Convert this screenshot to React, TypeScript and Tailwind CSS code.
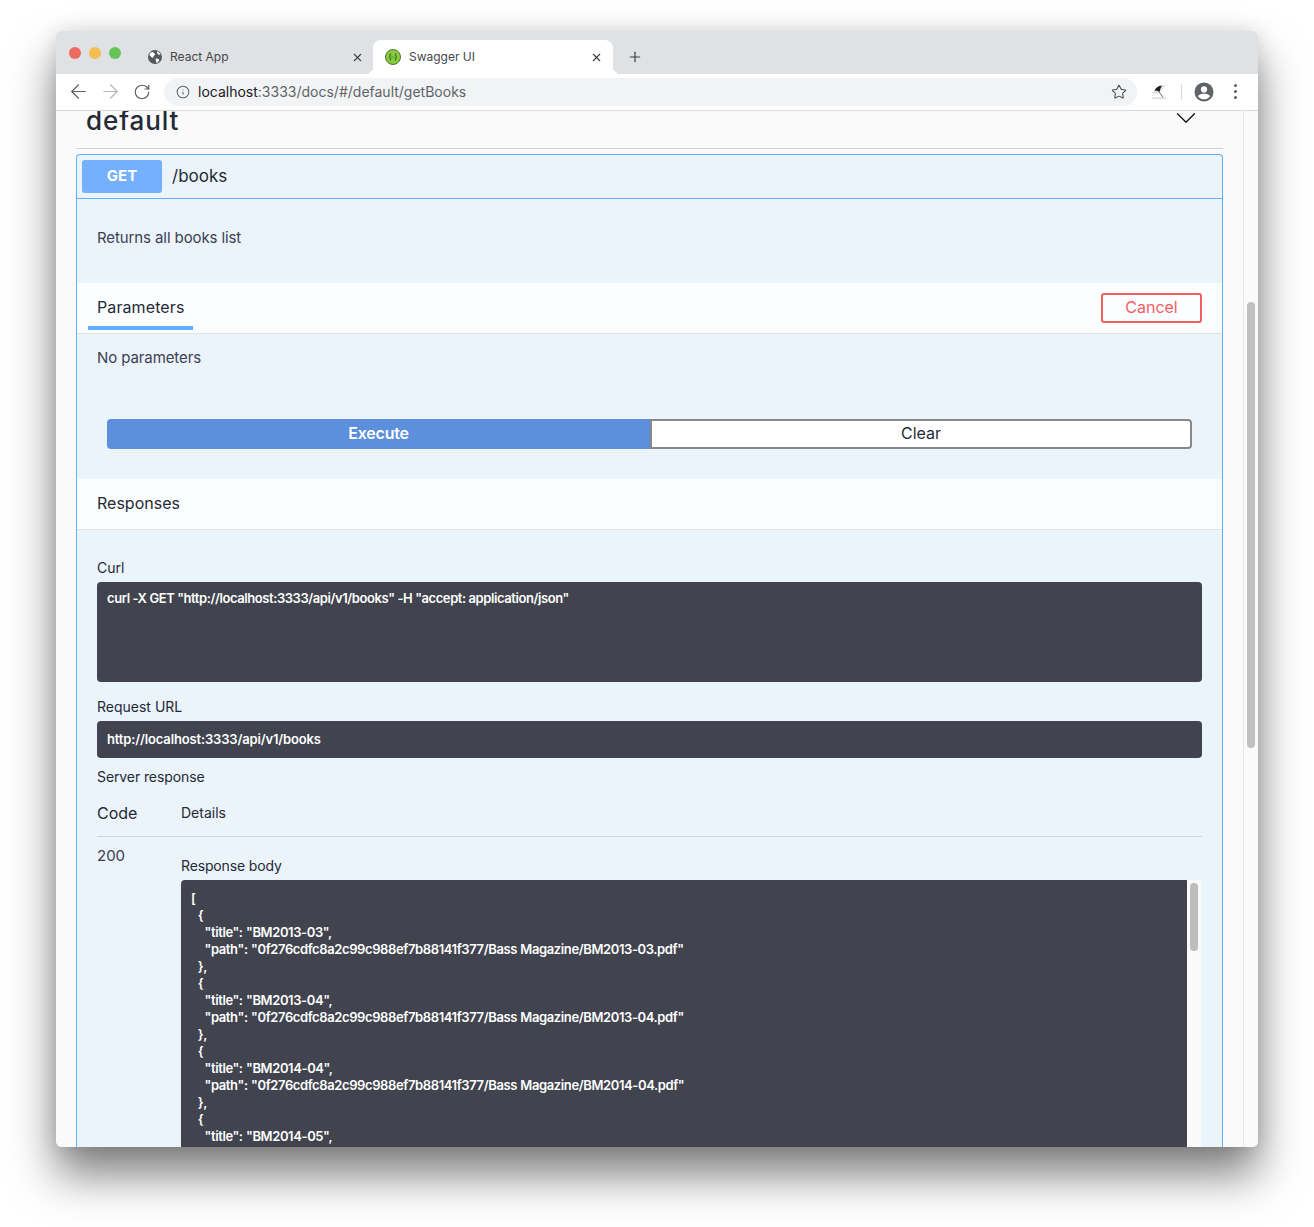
import React from 'react';
import { ArrowLeft, ArrowRight, RotateCw, Info, Star, X, Plus, ChevronDown } from 'lucide-react';

/* ── Browser chrome ─────────────────────────────── */

function GlobeIcon() {
  return (
    <svg width="16" height="16" viewBox="0 0 16 16" className="shrink-0">
      <circle cx="8" cy="8" r="7" fill="#55585d" />
      <path d="M3.2 3.8l2.3-.8 2 1.2.6 1.6-1.5 1.3-.3 1.6-1.6-.2L2.4 6zM8.5 9.5l2.6.2 1.2 1.3-1.3 2.2-1.5.8-.6-2.4zM10 1.9l2.7 2 .8 2-2.2-.3-1.4-1.6z" fill="#fff" />
    </svg>
  );
}

function SwaggerIcon() {
  return (
    <svg width="16" height="16" viewBox="0 0 16 16" className="shrink-0">
      <circle cx="8" cy="8" r="7.5" fill="#84cc3c" stroke="#55703a" strokeWidth="1" />
      <path d="M6 4.5c-1.2 0-.6 2.6-1.1 3-.3.3-.5.4-.5.5s.2.2.5.5c.5.4-.1 3 1.1 3M10 4.5c1.2 0 .6 2.6 1.1 3 .3.3.5.4.5.5s-.2.2-.5.5c-.5.4.1 3-1.1 3" fill="none" stroke="#2c3f22" strokeWidth="0.9" />
      <circle cx="7" cy="8" r=".5" fill="#2c3f22" />
      <circle cx="9" cy="8" r=".5" fill="#2c3f22" />
    </svg>
  );
}

function UmbrellaIcon() {
  return (
    <svg width="16" height="16" viewBox="0 0 16 16" className="shrink-0">
      <path d="M.5 9C1.2 8 2.3 7.2 3.5 7L8.5 8 6 10z" fill="#dcdcdc" />
      <path d="M11 1.6L15.5 1C13 2.5 11 4.5 9.5 8H8.5L9.5 4.5z" fill="#dedede" />
      <path d="M3.5 7C4.5 4 7 2 11 1.6L9.5 4.5 8.5 8C7 6.8 5 6.6 3.5 7z" fill="#1e1e1e" />
      <path d="M7.5 7.2l4.5 6.3" stroke="#8a6a50" strokeWidth="1" />
      <path d="M1 14.2h14" stroke="#d4d4d4" strokeWidth="1.2" />
    </svg>
  );
}

function AccountIcon() {
  return (
    <svg width="20" height="20" viewBox="0 0 20 20" className="shrink-0">
      <circle cx="10" cy="10" r="9.5" fill="#5f6368" />
      <circle cx="10" cy="7.4" r="3.1" fill="#fff" />
      <path d="M3.9 14.2C5.2 12.4 7.6 11.8 10 11.8s4.8.6 6.1 2.4C14.8 16.2 12.5 17.3 10 17.3s-4.8-1.1-6.1-3.1z" fill="#fff" />
    </svg>
  );
}

function Browser() {
  return (
    <div className="shrink-0">
      <div className="flex h-[43px] bg-[#dfe1e5]">
        <div className="flex w-[91px] items-center gap-2 pl-[13px] pt-[1px]">
          <span className="h-3 w-3 rounded-full bg-[#ee6a5e]" />
          <span className="h-3 w-3 rounded-full bg-[#f5bf4f]" />
          <span className="h-3 w-3 rounded-full bg-[#62c554]" />
        </div>
        <div className="mt-[9px] flex w-[226px] items-center text-[12px] text-[#45474b]">
          <GlobeIcon />
          <span className="ml-[7px] flex-1">React App</span>
          <X size={13} strokeWidth={2} className="mr-[9px] text-[#3c4043]" />
        </div>
        <div className="relative mt-[9px] flex w-[240px] items-center rounded-t-lg bg-white pl-[12px] text-[12px] text-[#45474b]">
          <span className="absolute -left-2 bottom-0 h-2 w-2 rounded-br-lg shadow-[4px_4px_0_0_#fff]" />
          <span className="absolute -right-2 bottom-0 h-2 w-2 rounded-bl-lg shadow-[-4px_4px_0_0_#fff]" />
          <SwaggerIcon />
          <span className="ml-[8px] flex-1">Swagger UI</span>
          <X size={13} strokeWidth={2} className="mr-[10px] text-[#3c4043]" />
        </div>
        <div className="mt-[9px] flex items-center pl-[14px]">
          <Plus size={16} strokeWidth={1.8} className="text-[#3c4043]" />
        </div>
      </div>
      <div className="flex h-[37px] items-center border-b border-[#d9d9d9] bg-white pb-px">
        <div className="flex w-[108px] items-center gap-[9px] pl-[11px]">
          <ArrowLeft size={23} strokeWidth={1.3} className="text-[#5f6368]" />
          <ArrowRight size={23} strokeWidth={1.3} className="text-[#b6b8bb]" />
          <RotateCw size={18} strokeWidth={1.6} className="ml-[2px] text-[#5f6368]" />
        </div>
        <div className="flex h-7 w-[973px] items-center rounded-full bg-[#f1f3f4] pl-[12px] pr-[10px] text-[14px] text-[#5f6368]">
          <Info size={14} strokeWidth={1.8} className="text-[#5f6368]" />
          <span className="ml-[8px] flex-1">
            <span className="text-[#202124]">localhost</span>:3333/docs/#/default/getBooks
          </span>
          <Star size={16} strokeWidth={1.6} className="text-[#4a4d51]" />
        </div>
        <div className="ml-[14px]">
          <UmbrellaIcon />
        </div>
        <div className="ml-[14px] h-4 w-px bg-[#d6d8da]" />
        <div className="ml-[12px]">
          <AccountIcon />
        </div>
        <div className="ml-[20px] flex flex-col gap-[3px]">
          <span className="h-[3px] w-[3px] rounded-full bg-[#5f6368]" />
          <span className="h-[3px] w-[3px] rounded-full bg-[#5f6368]" />
          <span className="h-[3px] w-[3px] rounded-full bg-[#5f6368]" />
        </div>
      </div>
    </div>
  );
}

/* ── Swagger page ───────────────────────────────── */

const RESPONSE_BODY = `[
  {
    "title": "BM2013-03",
    "path": "0f276cdfc8a2c99c988ef7b88141f377/Bass Magazine/BM2013-03.pdf"
  },
  {
    "title": "BM2013-04",
    "path": "0f276cdfc8a2c99c988ef7b88141f377/Bass Magazine/BM2013-04.pdf"
  },
  {
    "title": "BM2014-04",
    "path": "0f276cdfc8a2c99c988ef7b88141f377/Bass Magazine/BM2014-04.pdf"
  },
  {
    "title": "BM2014-05",`;

function Operation() {
  return (
    <div className="mt-[5px] rounded-t-[4px] border-x border-t border-[#61affe] bg-[#ebf3fb] text-[#3b4151]">
      <div className="flex h-[44px] items-center border-b border-[#61affe] pl-[5px]">
        <div className="flex h-[33px] w-[80px] items-center justify-center rounded-[3px] bg-[#74b0fb] text-[15px] font-bold text-white">GET</div>
        <span className="ml-[10px] text-[17px] text-[#242a36]">/books</span>
      </div>

      <div className="h-[84px] pl-[20px] pt-[29px] text-[15px] leading-[20px] tracking-[-0.1px]">Returns all books list</div>

      <div className="flex h-[51px] items-start justify-between border-b border-[#dfe3e8] bg-[#fcfdfe] pr-[20px]">
        <div className="ml-[11px] flex h-[47px] w-[105px] items-center border-b-[4px] border-[#61affe] pl-[9px] pt-[5px] text-[16px] tracking-[0.1px] text-[#242a36]">Parameters</div>
        <button className="mt-[10px] h-[30px] w-[101px] rounded-[3px] border-2 border-[#f25f5f] pb-[2px] text-[16px] text-[#f25f5f]">Cancel</button>
      </div>

      <div className="h-[85px] pl-[20px] pt-[14px] text-[15px] leading-[20px] tracking-[-0.1px]">No parameters</div>

      <div className="flex h-[30px] pl-[30px] pr-[30px]">
        <button className="h-full w-[543px] shrink-0 rounded-l-[4px] bg-[#5c8fdc] pb-[2px] text-[16px] font-semibold tracking-[-0.2px] text-white">Execute</button>
        <button className="h-full flex-1 rounded-r-[4px] border-2 border-[#888] bg-white pb-[2px] text-[16px] text-[#242a36]">Clear</button>
      </div>

      <div className="mt-[30px] flex h-[51px] items-center border-b border-[#dfe3e8] bg-[#fcfdfe] pb-[2px] pl-[20px] text-[16px] text-[#242a36]">Responses</div>

      <div className="px-[20px] pt-[30px]">
        <div className="text-[14px] leading-[16px] text-[#242a36]">Curl</div>
        <pre className="mt-[6px] h-[100px] rounded-[4px] bg-[#41444e] px-[10px] pt-[8px] font-['Inter',sans-serif] text-[13px] font-semibold leading-[16px] tracking-[-0.42px] text-white">curl -X GET "http://localhost:3333/api/v1/books" -H "accept: application/json"</pre>

        <div className="mt-[17px] text-[14px] leading-[16px] text-[#242a36]">Request URL</div>
        <pre className="mt-[6px] h-[37px] rounded-[4px] bg-[#41444e] px-[10px] pt-[10px] font-['Inter',sans-serif] text-[13px] font-semibold leading-[16px] tracking-[-0.15px] text-white">http://localhost:3333/api/v1/books</pre>

        <div className="mt-[11px] text-[14px] leading-[16px] tracking-[-0.1px] text-[#242a36]">Server response</div>

        <div className="mt-[19px] flex h-[33px] items-start border-b border-[#d3d6da] pb-[12px]">
          <div className="w-[84px] text-[16px] leading-[18px] text-[#242a36]">Code</div>
          <div className="text-[14px] leading-[18px] text-[#242a36]">Details</div>
        </div>

        <div className="flex pt-[10px]">
          <div className="w-[84px] text-[15px] leading-[18px]">200</div>
          <div className="min-w-0 flex-1">
            <div className="pt-[11px] text-[14px] leading-[16px] tracking-[-0.15px] text-[#242a36]">Response body</div>
            <div className="mt-[6px] flex pr-px">
              <pre className="h-[267px] flex-1 overflow-hidden rounded-tl-[4px] bg-[#41444e] px-[10px] pt-[10px] font-['Inter',sans-serif] text-[13px] font-semibold leading-[17px] tracking-[-0.39px] [word-spacing:0.5px] text-white">{RESPONSE_BODY}</pre>
              <div className="w-[14px] bg-[#fafafa] px-[3px] pt-[3px]">
                <div className="h-[68px] w-[8px] rounded-full bg-[#bdbdbd]" />
              </div>
            </div>
          </div>
        </div>
      </div>
    </div>
  );
}

function SwaggerPage() {
  return (
    <div className="flex min-h-0 flex-1 bg-[#fafafa]">
      <div className="min-w-0 flex-1 overflow-hidden pl-[20px] pr-[20px]">
        <div className="flex h-[38px] items-start justify-between border-b border-[#cfd1d4] pl-[10px] pr-[20px]">
          <span className="-mt-[7px] text-[26px] font-medium leading-[34px] tracking-[0.9px] text-[#242a36]">default</span>
          <ChevronDown size={34} strokeWidth={0.9} className="-mt-[10px] text-[#111]" />
        </div>
        <Operation />
      </div>
      <div className="w-[15px] border-l border-[#e8e8e8] bg-[#fafafa] px-[3px] pt-[191px]">
        <div className="h-[446px] w-[8px] rounded-full bg-[#c1c1c1]" />
      </div>
    </div>
  );
}

export default function App() {
  return (
    <div className="h-[1227px] w-[1314px] overflow-hidden bg-white pl-[56px] pt-[31px] font-['Inter',sans-serif]">
      <div className="flex h-[1116px] w-[1202px] flex-col overflow-hidden rounded-[6px] shadow-[0_28px_45px_0_rgba(0,0,0,0.5),0_0_20px_0_rgba(0,0,0,0.12)]">
        <Browser />
        <SwaggerPage />
      </div>
    </div>
  );
}
